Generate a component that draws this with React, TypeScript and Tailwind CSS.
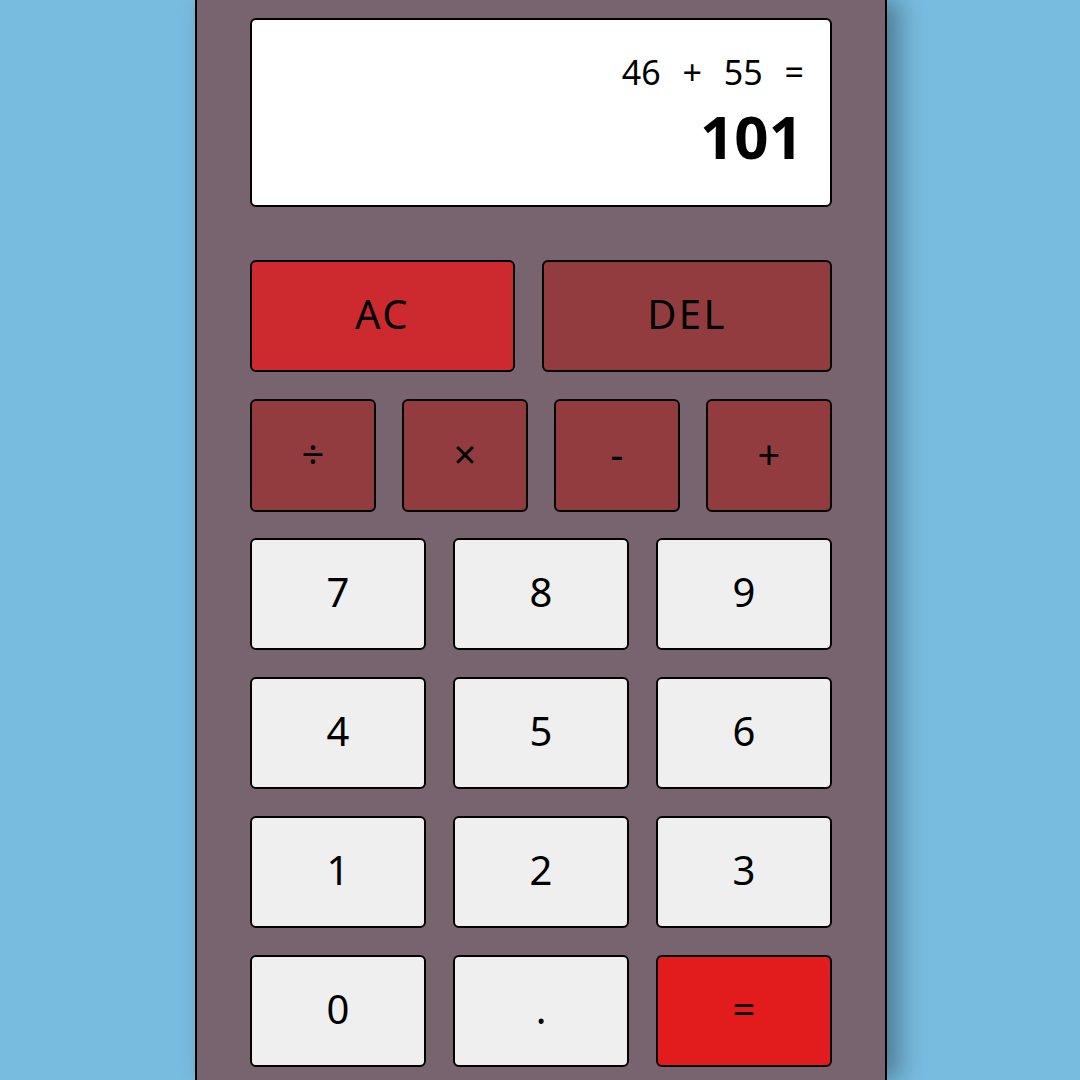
import React from 'react';

const digits = ['7', '8', '9', '4', '5', '6', '1', '2', '3', '0', '.'];

export default function App() {
  return (
    <main className="h-screen w-full overflow-hidden bg-[#78bcdf] font-['Noto_Sans',sans-serif] text-black">
      <div className="ml-[195px] h-[1080px] w-[692px] border-x-2 border-black bg-[#78646e] px-[53px] pt-[18px] shadow-[12px_0_24px_rgba(0,0,0,0.35)]">
        {/* Display */}
        <div className="flex h-[189px] flex-col items-end rounded-md border-2 border-black bg-white pr-[26px] pt-[28px]">
          <div className="text-[34px] leading-[48px] [word-spacing:13px]">46 + 55 =</div>
          <div className="pr-[1px] text-[60px] font-bold leading-[80px]">101</div>
        </div>

        {/* Clear / delete */}
        <div className="mt-[53px] flex gap-[27px]">
          <button className="h-[112px] w-[265px] rounded-md border-2 border-black bg-[#cc2a2e] pb-[4px] text-[40px] tracking-[0.06em]">
            AC
          </button>
          <button className="h-[112px] flex-1 rounded-md border-2 border-black bg-[#933c40] pb-[4px] text-[40px] tracking-[0.06em]">
            DEL
          </button>
        </div>

        {/* Operators */}
        <div className="mt-[27px] grid grid-cols-4 gap-[26px]">
          {['÷', '×', '-', '+'].map((op) => (
            <button
              key={op}
              className="h-[113px] rounded-md border-2 border-black bg-[#933c40] pb-[4px] text-[40px]"
            >
              {op}
            </button>
          ))}
        </div>

        {/* Digits */}
        <div className="mt-[26px] grid grid-cols-3 gap-x-[27px] gap-y-[27px]">
          {digits.map((d) => (
            <button
              key={d}
              className="h-[112px] rounded-md border-2 border-black bg-[#efefef] pb-[4px] text-[40px]"
            >
              {d}
            </button>
          ))}
          <button className="h-[112px] rounded-md border-2 border-black bg-[#e21c1c] pb-[4px] text-[40px]">=</button>
        </div>
      </div>
    </main>
  );
}
